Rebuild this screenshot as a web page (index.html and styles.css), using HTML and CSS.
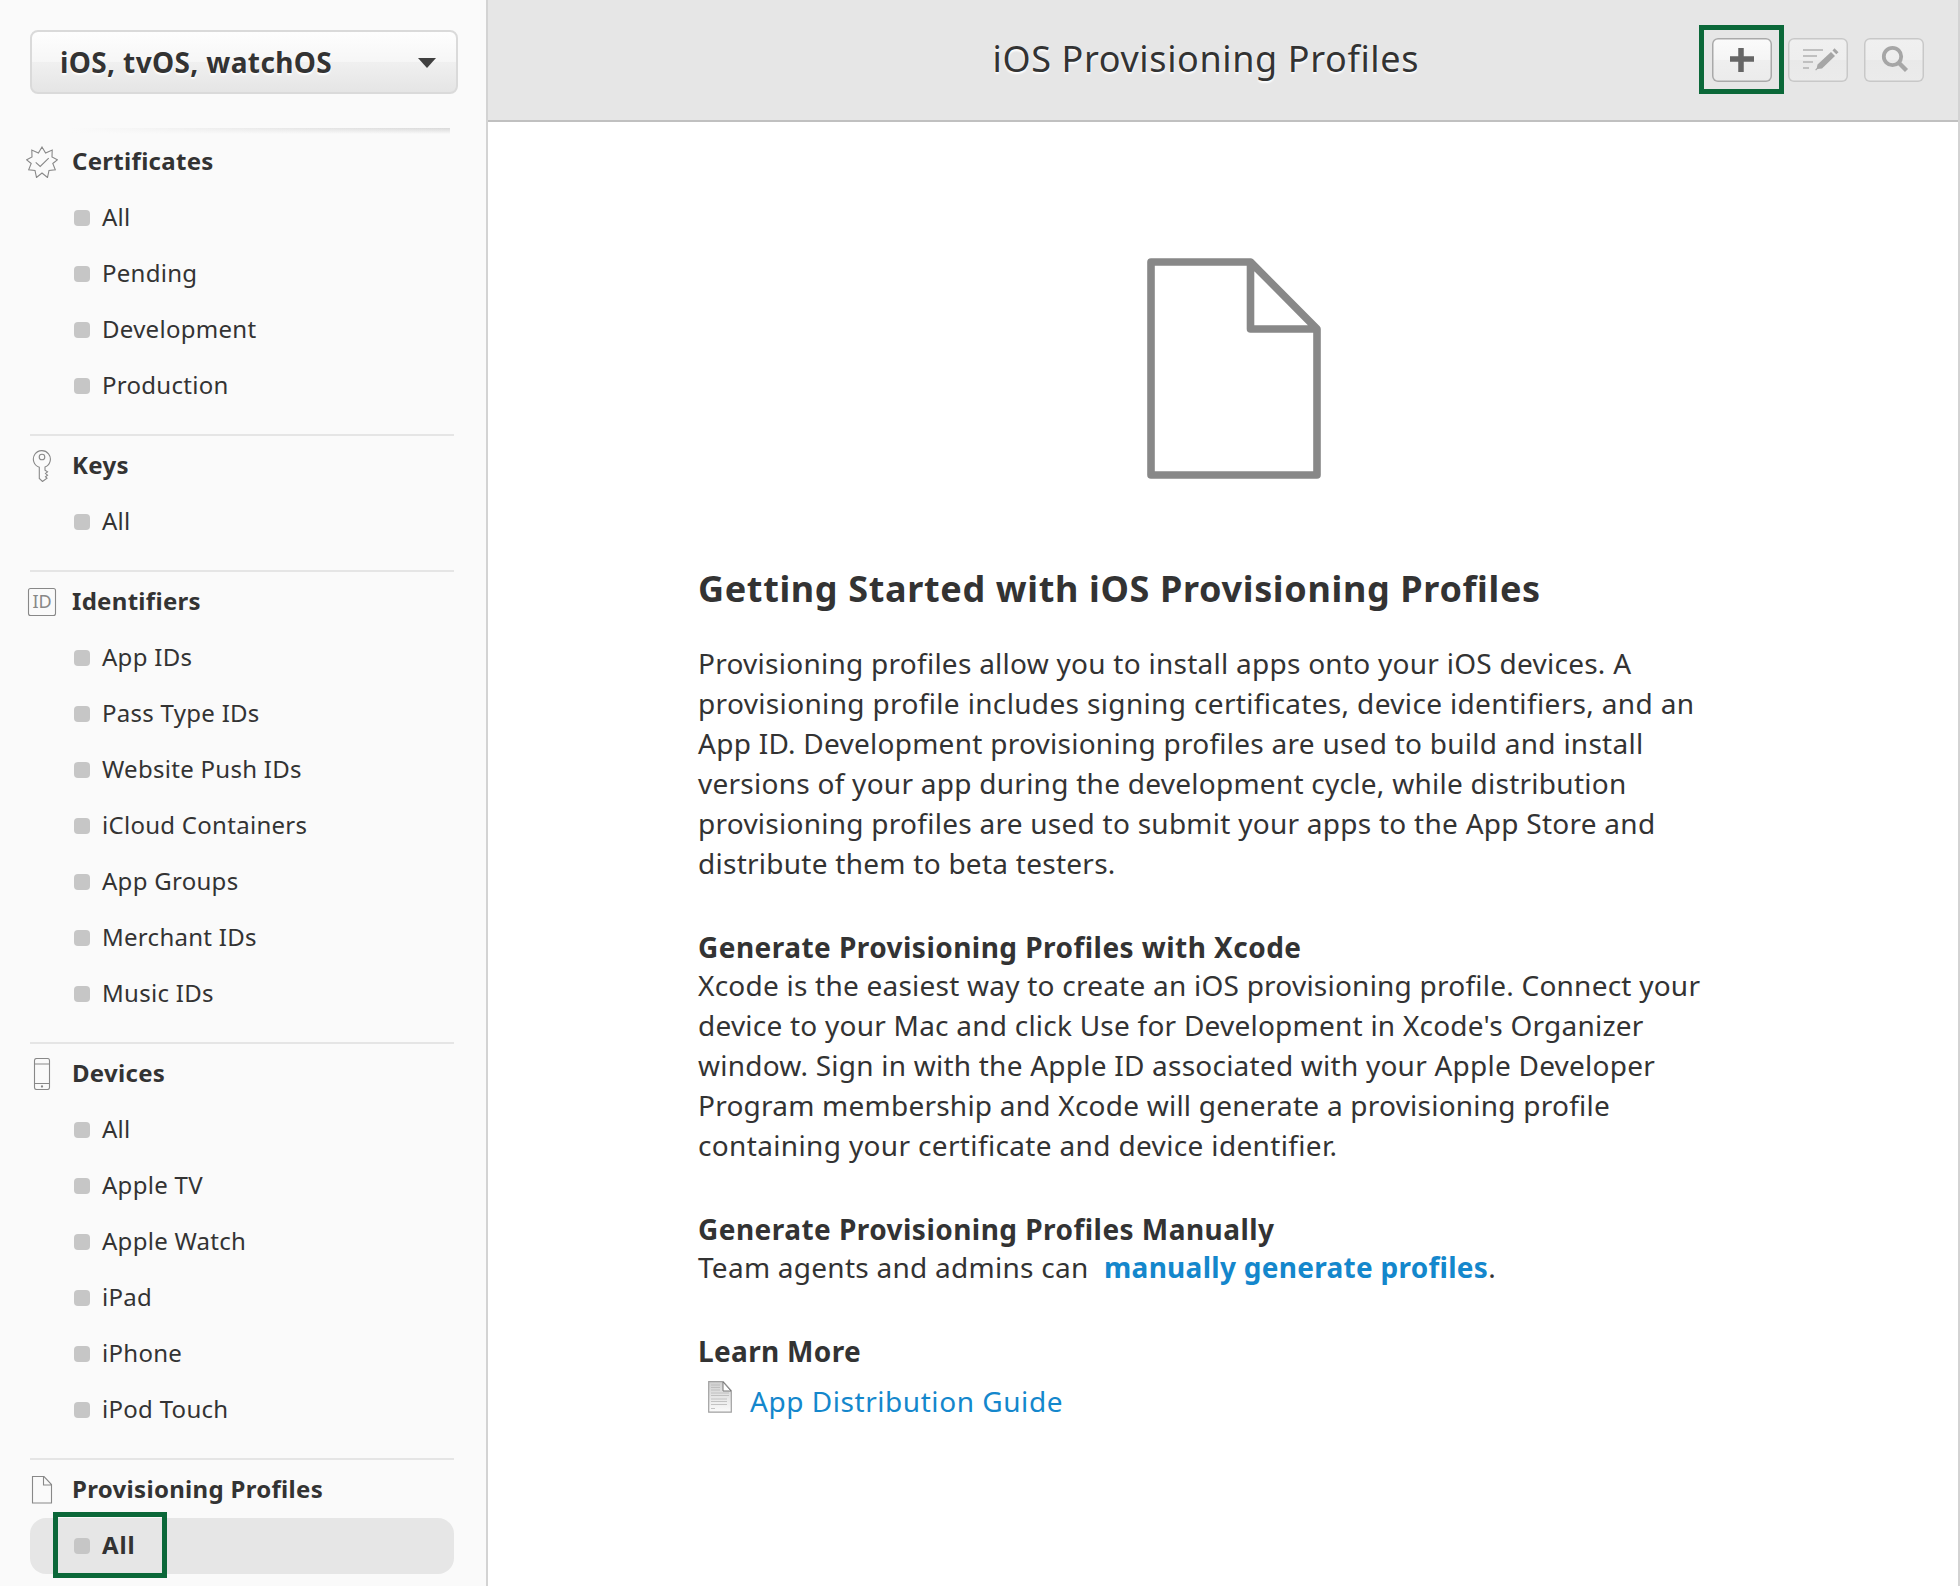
FILE: index.html
```html
<!DOCTYPE html>
<html lang="en">
<head>
<meta charset="utf-8">
<title>iOS Provisioning Profiles</title>
<link rel="stylesheet" href="styles.css">
</head>
<body>
<div class="app">
  <aside class="sidebar">
    <button class="platform"><span>iOS, tvOS, watchOS</span><i class="caret"></i></button>
    <div class="fade-rule"></div>
    <nav>
      <section class="group first">
        <h2><svg class="ico" viewBox="0 0 32 32"><path d="M16 1l3.600 6 6.600-3-.2 7 5.300 2.800-4.500 3.700 2.500 6.200-6.300.8-1.500 7L16 27l-5.500 4.500-1.500-7-6.300-.8 2.500-6.200L.7 13.800 6 11l-.2-7 6.600 3z"/><path d="M9.700 16.300l4.500 4.100 8.500-8.300"/></svg>Certificates</h2>
        <ul><li>All</li><li>Pending</li><li>Development</li><li>Production</li></ul>
      </section>
      <section class="group">
        <h2><svg class="ico" viewBox="0 0 32 32"><path d="M13.300 17.200A8.500 8.500 0 1 1 19 17v3.300l2.500 1.500-2 1.700 2 1.700-2 1.500 1.500 1.500-4.500 3.300-3.200-3z"/><circle cx="16" cy="7" r="2.800"/></svg>Keys</h2>
        <ul><li>All</li></ul>
      </section>
      <section class="group">
        <h2><svg class="ico" viewBox="0 0 32 32"><rect x="2.500" y="2.500" width="27" height="27" rx="2"/><text x="16" y="22.400" text-anchor="middle">ID</text></svg>Identifiers</h2>
        <ul><li>App IDs</li><li>Pass Type IDs</li><li>Website Push IDs</li><li>iCloud Containers</li><li>App Groups</li><li>Merchant IDs</li><li>Music IDs</li></ul>
      </section>
      <section class="group">
        <h2><svg class="ico" viewBox="0 0 32 32"><rect x="8.500" y=".5" width="15" height="31" rx="2"/><path d="M8.500 6h15M8.500 25.500h15"/><circle cx="16" cy="28.500" r=".6"/></svg>Devices</h2>
        <ul><li>All</li><li>Apple TV</li><li>Apple Watch</li><li>iPad</li><li>iPhone</li><li>iPod Touch</li></ul>
      </section>
      <section class="group">
        <h2><svg class="ico" viewBox="0 0 32 32"><path d="M6.500 2.500h11.500l7.500 8v18.500h-19zM17.500 2.500v8.500h8"/></svg>Provisioning Profiles</h2>
        <ul><li class="selected">All<span class="mark"></span></li></ul>
      </section>
    </nav>
  </aside>

  <div class="main">
    <header class="topbar">
      <h1>iOS Provisioning Profiles</h1>
      <div class="tools">
        <button class="tool"><svg viewBox="0 0 60 44"><path d="M18 21h24M29 10v24" stroke="#666" stroke-width="5.500" fill="none"/></svg><span class="mark"></span></button>
        <button class="tool off"><svg viewBox="0 0 60 44"><path d="M15 12h20M15 18h14M15 24h10M15 30h6" stroke="#c0c0c0" stroke-width="2" fill="none"/><path d="M43 14l4 4-13 12.500-4.500.5-1.500 1.500-.8-.8 1.600-1.700.7-3.500zM44.500 12.500l2-2.200 4 4-2.200 2z" fill="#a6a6a6"/></svg></button>
        <button class="tool off"><svg viewBox="0 0 60 44"><circle cx="28.500" cy="18.500" r="8.700" fill="none" stroke="#a6a6a6" stroke-width="3.800"/><path d="M34.500 24.500l8 8" stroke="#a6a6a6" stroke-width="4.400"/></svg></button>
      </div>
    </header>
    <main class="content">
      <svg class="doc" viewBox="0 0 174 222"><path d="M4 4h99.500l66.500 67v146H4zM103.500 4v67H170"/></svg>
      <h2>Getting Started with iOS Provisioning Profiles</h2>
      <p class="intro">Provisioning profiles allow you to install apps onto your iOS devices. A<br><span class="loose">provisioning profile includes signing certificates, device identifiers, and an</span><br>App ID. Development provisioning profiles are used to build and install<br>versions of your app during the development cycle, while distribution<br>provisioning profiles are used to submit your apps to the App Store and<br>distribute them to beta testers.</p>
      <h3>Generate Provisioning Profiles with Xcode</h3>
      <p class="xcode">Xcode is the easiest way to create an iOS provisioning profile. Connect your<br>device to your Mac and click Use for Development in Xcode's Organizer<br>window. Sign in with the Apple ID associated with your Apple Developer<br>Program membership and Xcode will generate a provisioning profile<br><span class="loose">containing your certificate and device identifier.</span></p>
      <h3>Generate Provisioning Profiles Manually</h3>
      <p>Team agents and admins can <a class="strong" href="#">manually generate profiles</a>.</p>
      <h3 class="learn">Learn More</h3>
      <a class="guide" href="#"><svg viewBox="0 0 24 32"><defs><linearGradient id="pg" x1="0" y1="0" x2="0" y2="1"><stop offset="0" stop-color="#d0d0d0"/><stop offset="1" stop-color="#fbfbfb"/></linearGradient></defs><path d="M.7.700h14.500l8.100 9v21.500H.7z" fill="url(#pg)" stroke="#a0a0a0" stroke-width="1.200"/><path d="M3 4h9M3 6.500h9M3 9h9M3 12h18M3 14.500h18M3 18h16M3 20.500h16M3 23.500h16M3 27.500h4" stroke="#b8b8b8" stroke-width=".8"/><path d="M15 1v9h8z" fill="#fff" stroke="#777" stroke-width="1"/></svg><span>App Distribution Guide</span></a>
    </main>
  </div>
</div>
</body>
</html>
```
FILE: styles.css
```css
* { box-sizing: border-box; margin: 0; padding: 0; }
body {
  font-family: "Noto Sans", "Open Sans", sans-serif;
  color: #333;
  background: #fff;
}
button { font: inherit; color: inherit; }
.app { display: flex; width: 1960px; height: 1586px; overflow: hidden; }

/* Sidebar */
.sidebar {
  width: 488px;
  padding: 30px 0 0 30px;
  background: #fafafa;
  border-right: 2px solid #d3d3d3;
}
.platform {
  display: flex;
  align-items: center;
  justify-content: space-between;
  width: 428px;
  height: 64px;
  padding: 0 20px 1px 28px;
  border: 2px solid #dadada;
  border-radius: 8px;
  background: linear-gradient(#fefefe, #f6f6f6 50%, #f0f0f0 50%, #e5e5e5);
  font-size: 28px;
  font-weight: 700;
  letter-spacing: .38px;
  text-shadow: 0 2px 2px #fff;
}
.caret {
  border: 9px solid transparent;
  border-top: 10px solid #404040;
  border-bottom: 0;
  margin-top: 2px;
}
.fade-rule {
  width: 380px;
  height: 6px;
  margin: 34px 0 -2px 40px;
  background: linear-gradient(90deg, #fafafa, rgba(250, 250, 250, 0)), linear-gradient(#d9d9d9, #fafafa);
}
.group { width: 424px; margin-top: 20px; border-top: 2px solid #e5e5e5; }
.group.first { margin-top: 0; border-top: 0; }
.group h2 {
  display: flex;
  align-items: flex-start;
  gap: 14px;
  height: 58px;
  margin-left: -4px;
  font-size: 24px;
  font-weight: 700;
  line-height: 57px;
  letter-spacing: .3px;
}
.ico {
  width: 32px;
  height: 32px;
  margin-top: 14px;
  fill: none;
  stroke: #888;
  stroke-width: 1.1;
  flex: none;
}
.ico text { font-size: 18px; font-weight: 400; fill: #888; stroke: none; letter-spacing: 0; }
.group ul { list-style: none; }
.group li {
  position: relative;
  display: flex;
  gap: 12px;
  height: 56px;
  padding-left: 44px;
  font-size: 24px;
  line-height: 54px;
  letter-spacing: .28px;
}
.group li::before {
  content: "";
  width: 16px;
  height: 16px;
  margin-top: 20px;
  border-radius: 4px;
  background: #c6c6c6;
}
.group li.selected { border-radius: 16px; background: #e6e6e6; font-weight: 700; letter-spacing: .9px; }
.mark { position: absolute; border: 5px solid #0b6839; }
.selected .mark { left: 23px; top: -6px; width: 114px; height: 66px; }

/* Main area */
.main { flex: 1; border-right: 2px solid #d3d3d3; }
.topbar {
  display: flex;
  align-items: center;
  justify-content: flex-end;
  gap: 293px;
  height: 122px;
  padding-right: 34px;
  background: #e6e6e6;
  border-bottom: 2px solid #c0c0c0;
}
.topbar h1 {
  padding-bottom: 2px;
  font-size: 36px;
  font-weight: 400;
  line-height: 118px;
  letter-spacing: .62px;
  white-space: nowrap;
  text-shadow: 0 2px 2px #fff;
}
.tools { display: flex; gap: 16px; }
.tool {
  position: relative;
  width: 60px;
  height: 44px;
  border: 0;
  border-radius: 6px;
  background: linear-gradient(#fbfbfb, #f5f5f5 50%, #efefef 50%, #ebebeb);
  box-shadow: inset 0 0 0 1.5px #a9a9a9;
}
.tool.off { background: linear-gradient(#f0f0f0, #eee 50%, #e9e9e9 50%, #ebebeb); box-shadow: inset 0 0 0 1.5px #c8c8c8; }
.tool svg { display: block; width: 60px; height: 44px; }
.tool .mark { left: -13px; top: -13px; width: 85px; height: 69px; }

.content { padding: 136px 0 0 210px; font-size: 28px; line-height: 40px; letter-spacing: .26px; white-space: nowrap; }
.doc {
  display: block;
  width: 174px;
  height: 222px;
  margin-left: 449px;
  fill: none;
  stroke: #888;
  stroke-width: 7.6;
  stroke-linejoin: round;
}
.content h2 { margin-top: 89px; font-size: 36px; font-weight: 700; line-height: 40px; letter-spacing: .65px; }
.intro { margin-top: 34px; }
.xcode { letter-spacing: .23px; }
.loose { letter-spacing: .35px; }
.content h3 { margin: 45px 0 -1px; font-size: 28px; font-weight: 700; line-height: 38px; letter-spacing: .46px; }
.content .learn { letter-spacing: .33px; }
a { color: #1487cc; text-decoration: none; }
.strong { margin-left: 8px; font-weight: 700; letter-spacing: .28px; }
.guide { display: flex; align-items: flex-start; gap: 18px; margin: 12px 0 0 10px; letter-spacing: .55px; }
.guide svg { width: 24px; height: 32px; }
```
